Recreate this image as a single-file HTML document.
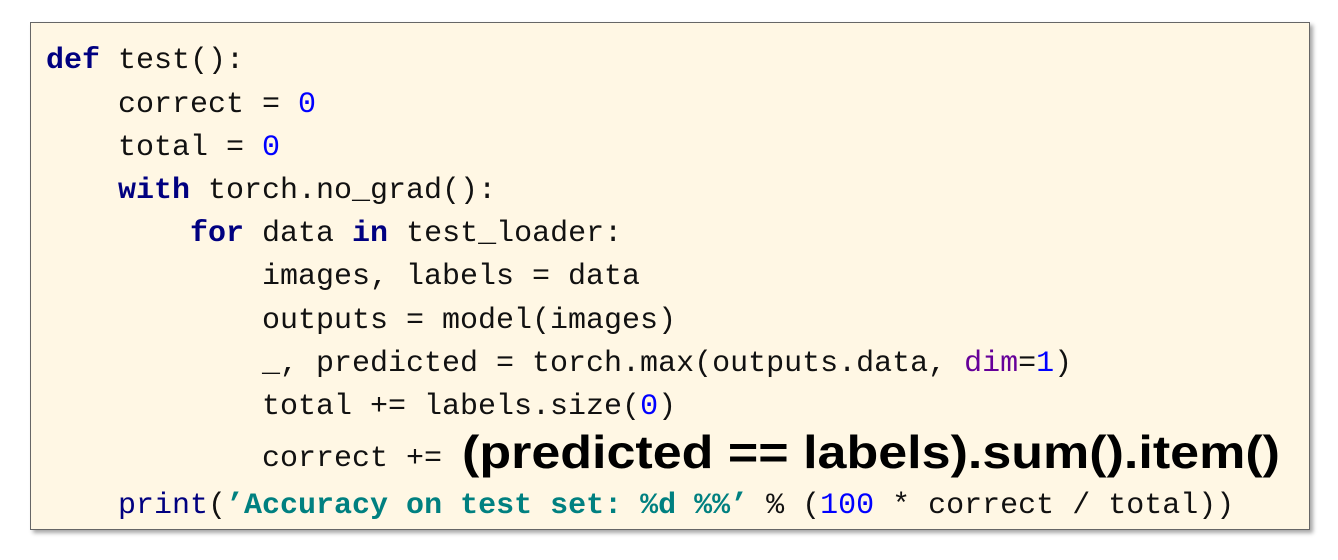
<!DOCTYPE html>
<html><head><meta charset="utf-8"><style>
html,body{margin:0;padding:0;background:#fff;width:1338px;height:560px;overflow:hidden}
.box{position:absolute;left:30px;top:22px;width:1278px;height:506px;background:#FFF7E4;border:1.5px solid #666;box-shadow:3px 3px 4px rgba(0,0,0,0.35)}
svg{position:absolute;left:0;top:0}
text{font-family:"Liberation Mono",monospace;font-size:30px;fill:#111;white-space:pre}
.k{fill:#000080;font-weight:bold}
.n{fill:#0000FF}
.p{fill:#660099}
.s{fill:#008080;font-weight:bold}
.f{fill:#000080}
</style></head><body>
<div class="box"></div>
<svg width="1338" height="560" xml:space="preserve">
<text x="46" y="68"><tspan class="k">def</tspan> test():</text>
<text x="118" y="112">correct = <tspan class="n">0</tspan></text>
<text x="118" y="155">total = <tspan class="n">0</tspan></text>
<text x="118" y="198"><tspan class="k">with</tspan> torch.no_grad():</text>
<text x="190" y="241"><tspan class="k">for</tspan> data <tspan class="k">in</tspan> test_loader:</text>
<text x="262" y="284">images, labels = data</text>
<text x="262" y="328">outputs = model(images)</text>
<text x="262" y="371">_, predicted = torch.max(outputs.data, <tspan class="p">dim</tspan>=<tspan class="n">1</tspan>)</text>
<text x="262" y="414">total += labels.size(<tspan class="n">0</tspan>)</text>
<text x="262" y="466">correct +=</text>
<text x="462" y="468" textLength="818" lengthAdjust="spacingAndGlyphs" style="font-family:'Liberation Sans',sans-serif;font-weight:bold;font-size:46px;fill:#000">(predicted == labels).sum().item()</text>
<text x="118" y="513"><tspan class="f">print</tspan>(<tspan class="s">’Accuracy on test set: %d %%’</tspan> % (<tspan class="n">100</tspan> * correct / total))</text>
</svg>
</body></html>
